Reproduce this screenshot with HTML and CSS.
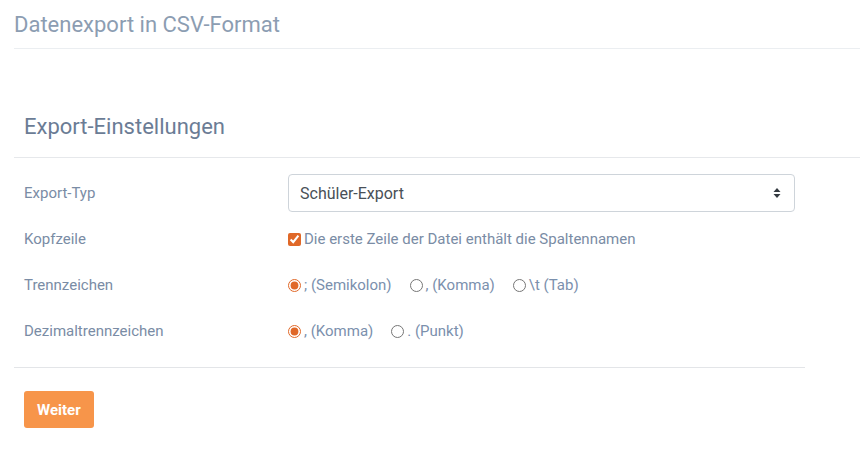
FILE: index.html
```html
<!DOCTYPE html>
<html lang="de">
  <head>
    <meta charset="UTF-8" />
    <meta name="viewport" content="width=device-width, initial-scale=1.0" />
    <title>Datenexport in CSV-Format</title>
    <link rel="stylesheet" href="styles.css">
  </head>
  <body>
    <div class="page">
      <h1 class="page-title">Datenexport in CSV-Format</h1>

      <div class="panel">
        <h2 class="panel-title">Export-Einstellungen</h2>

        <form class="settings">
          <div class="form-row">
            <label for="exporttyp">Export-Typ</label>
            <div class="select-wrap">
              <select id="exporttyp">
                <option>Schüler-Export</option>
                <option>Lehrer-Export</option>
                <option>Klassen-Export</option>
              </select>
              <svg class="select-arrows" width="8" height="12" viewBox="0 0 8 12">
                <path d="M4 1 L7.5 5 H0.5 Z M4 11 L7.5 7 H0.5 Z" fill="#343a40" />
              </svg>
            </div>
          </div>

          <div class="form-row">
            <span class="label">Kopfzeile</span>
            <label class="check">
              <input type="checkbox" checked>
              Die erste Zeile der Datei enthält die Spaltennamen
            </label>
          </div>

          <div class="form-row">
            <span class="label">Trennzeichen</span>
            <div class="options">
              <label class="check"><input type="radio" name="sep" checked> ; (Semikolon)</label>
              <label class="check"><input type="radio" name="sep"> , (Komma)</label>
              <label class="check"><input type="radio" name="sep"> \t (Tab)</label>
            </div>
          </div>

          <div class="form-row">
            <span class="label">Dezimaltrennzeichen</span>
            <div class="options">
              <label class="check"><input type="radio" name="dec" checked> , (Komma)</label>
              <label class="check"><input type="radio" name="dec"> . (Punkt)</label>
            </div>
          </div>
        </form>

        <div class="actions">
          <button type="button">Weiter</button>
        </div>
      </div>
    </div>
  </body>
</html>
```

FILE: styles.css
```css
body {
  font-family: Roboto, "Liberation Sans", Arial, sans-serif;
  background: white;
  margin: 0;
  color: #7a8ca5;
}
.page {
  padding: 0 0 0 14px;
}
.page-title {
  font-size: 22px;
  font-weight: 400;
  color: #8c9db2;
  margin: 0;
  padding: 10px 0 8px 0;
  line-height: 30px;
  border-bottom: 1px solid #ebeef1;
}
.panel {
  margin-top: 63px;
  width: 791px;
}
.panel-title {
  font-size: 22px;
  font-weight: 400;
  color: #6b7c95;
  margin: 0;
  padding: 0 0 15px 10px;
  line-height: 30px;
  border-bottom: 1px solid #e6e8eb;
  width: 836px;
}
.settings {
  display: flex;
  flex-direction: column;
  gap: 8px;
  padding: 16px 10px 17px 10px;
  border-bottom: 1px solid #e3e5e8;
}
.form-row {
  display: grid;
  grid-template-columns: 264px 1fr;
  align-items: center;
  min-height: 38px;
  font-size: 15px;
}
.form-row > label,
.label {
  color: #7a8ca5;
}
.select-wrap {
  position: relative;
}
select {
  appearance: none;
  -webkit-appearance: none;
  width: 100%;
  height: 38px;
  padding: 0 30px 0 11px;
  font-family: inherit;
  font-size: 16px;
  color: #495057;
  background: white;
  border: 1px solid #ced4da;
  border-radius: 4px;
}
.select-arrows {
  position: absolute;
  right: 14px;
  top: 13px;
  pointer-events: none;
}
.check {
  display: inline-flex;
  align-items: center;
  gap: 3px;
  color: #7b90ad;
}
.check input {
  margin: 0;
  width: 13px;
  height: 13px;
  accent-color: #e06828;
}
.options {
  display: flex;
  gap: 18px;
}
.actions {
  padding: 23px 10px;
}
button {
  padding: 0 13px;
  height: 37px;
  border: none;
  background: #f7954a;
  color: white;
  font-family: inherit;
  font-size: 15px;
  font-weight: 700;
  border-radius: 3px;
  cursor: pointer;
}
button:hover {
  background: #f2853a;
}
```
